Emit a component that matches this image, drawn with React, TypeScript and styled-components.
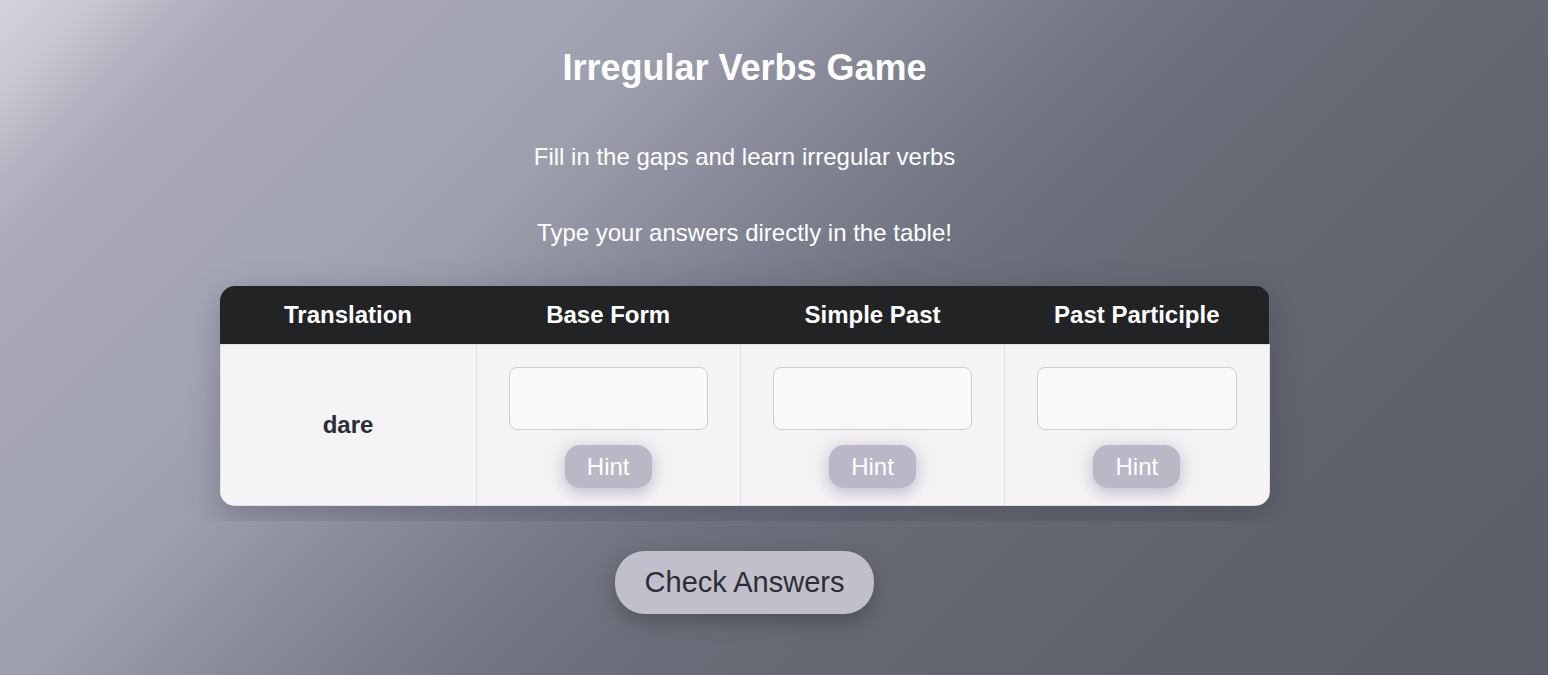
import React from 'react';
import styled, { createGlobalStyle } from 'styled-components';

const GlobalStyle = createGlobalStyle`
  * {
    box-sizing: border-box;
  }

  body {
    margin: 0;
    font-family: 'Liberation Sans', Arial, sans-serif;
    font-size: 24px;
    line-height: 28px;
    color: #ffffff;
  }
`;

const Page = styled.main`
  display: flex;
  flex-direction: column;
  align-items: center;
  min-height: 100vh;
  padding: 46px 59px 61px 0;
  background: linear-gradient(
    135deg,
    #d6d3de 0%,
    #cac7d3 4%,
    #b6b4c2 8%,
    #aaa9b8 12%,
    #a7a7b6 17%,
    #a4a5b4 25%,
    #9c9eac 32%,
    #8c8e9d 39%,
    #7c7f8d 46%,
    #717581 52%,
    #6a6d79 59%,
    #636771 70%,
    #5e626c 82%,
    #5a5e68 100%
  );
`;

const Title = styled.h1`
  margin: 0 0 53px;
  font-size: 36px;
  line-height: 44px;
`;

const Intro = styled.p`
  margin: 0 0 48px;
`;

const Instruction = styled(Intro)`
  margin: 0;
`;

const TableArea = styled.section`
  width: 100%;
  display: flex;
  justify-content: center;
  padding: 39px 30px 15px;
  overflow: hidden;
`;

const TableFrame = styled.div`
  width: 100%;
  max-width: 1050px;
  border-radius: 15px;
  box-shadow: 0 8px 32px rgba(40, 42, 58, 0.3);
`;

const TableClip = styled.div`
  border-radius: 15px;
  overflow: hidden;
`;

const VerbTable = styled.table`
  width: 100%;
  border-collapse: collapse;
  table-layout: fixed;
`;

const HeaderCell = styled.th<{ $narrow?: boolean }>`
  width: ${({ $narrow }) => ($narrow ? '256px' : 'auto')};
  height: 58px;
  padding: 0;
  background: #222325;
  font-weight: 700;
`;

const WordCell = styled.th`
  padding: 0;
  border: 1px solid #e0dfe5;
  background: #f5f3f5;
  color: #2c2d35;
  vertical-align: middle;
`;

const AnswerCell = styled.td`
  padding: 22px 32px 17px;
  border: 1px solid #e0dfe5;
  background: #f5f3f5;
`;

const AnswerStack = styled.div`
  display: flex;
  flex-direction: column;
  align-items: center;
  gap: 15px;
`;

const AnswerInput = styled.input`
  width: 100%;
  height: 63px;
  padding: 0 16px;
  border: 1px solid #cdccd8;
  border-radius: 8px;
  background: #faf8fa;
  color: #2c2d35;
  font: inherit;
  text-align: center;
`;

const HintButton = styled.button`
  height: 43px;
  padding: 1px 22px 0;
  border: 0;
  border-radius: 15px;
  background: #b9b8c7;
  box-shadow:
    0 5px 14px rgba(130, 130, 175, 0.4),
    0 0 24px rgba(200, 170, 200, 0.25);
  color: #ffffff;
  font: inherit;
  cursor: pointer;
`;

const CheckButton = styled.button`
  height: 63px;
  margin-top: 30px;
  padding: 0 30px;
  border: 0;
  border-radius: 30px;
  background: #c2bfcd;
  box-shadow: 0 8px 20px rgba(34, 35, 37, 0.35);
  color: #2c2d35;
  font-family: inherit;
  font-size: 29px;
  cursor: pointer;
`;

const forms = ['Base Form', 'Simple Past', 'Past Participle'];

export default function App() {
  return (
    <>
      <GlobalStyle />
      <Page>
        <Title>Irregular Verbs Game</Title>
        <Intro>Fill in the gaps and learn irregular verbs</Intro>
        <Instruction>Type your answers directly in the table!</Instruction>
        <TableArea>
          <TableFrame>
            <TableClip>
              <VerbTable>
                <thead>
                  <tr>
                    <HeaderCell scope="col" $narrow>Translation</HeaderCell>
                    {forms.map((form) => (
                      <HeaderCell key={form} scope="col">{form}</HeaderCell>
                    ))}
                  </tr>
                </thead>
                <tbody>
                  <tr>
                    <WordCell scope="row">dare</WordCell>
                    {forms.map((form) => (
                      <AnswerCell key={form}>
                        <AnswerStack>
                          <AnswerInput type="text" aria-label={form} />
                          <HintButton type="button">Hint</HintButton>
                        </AnswerStack>
                      </AnswerCell>
                    ))}
                  </tr>
                </tbody>
              </VerbTable>
            </TableClip>
          </TableFrame>
        </TableArea>
        <CheckButton type="button">Check Answers</CheckButton>
      </Page>
    </>
  );
}
